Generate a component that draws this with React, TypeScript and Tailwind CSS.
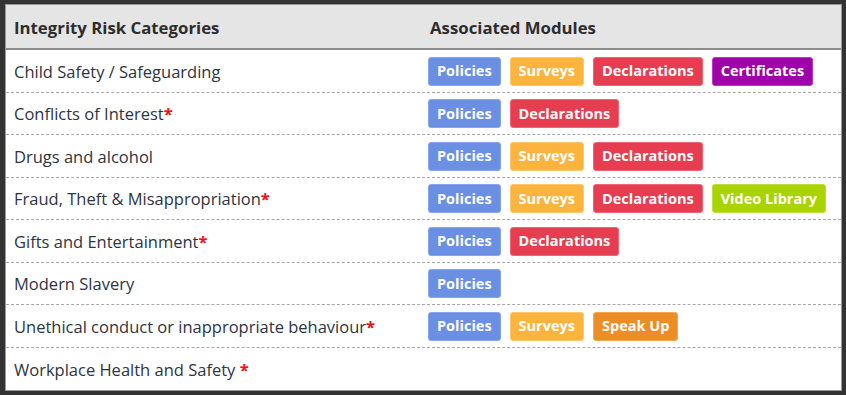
import React from 'react'

type Mod = 'Policies' | 'Surveys' | 'Declarations' | 'Certificates' | 'Video Library' | 'Speak Up'

const modColors: Record<Mod, string> = {
  Policies: 'bg-[#6b8fe3] border-[#86a4ec]',
  Surveys: 'bg-[#fcb43e] border-[#fdc86e]',
  Declarations: 'bg-[#e63d51] border-[#ee6676]',
  Certificates: 'bg-[#9f02a8] border-[#b53dbc]',
  'Video Library': 'bg-[#a9d301] border-[#bedf3b]',
  'Speak Up': 'bg-[#ec8d25] border-[#f2a657]',
}

const rows: { name: string; star?: boolean; space?: boolean; mods: Mod[] }[] = [
  { name: 'Child Safety / Safeguarding', mods: ['Policies', 'Surveys', 'Declarations', 'Certificates'] },
  { name: 'Conflicts of Interest', star: true, mods: ['Policies', 'Declarations'] },
  { name: 'Drugs and alcohol', mods: ['Policies', 'Surveys', 'Declarations'] },
  { name: 'Fraud, Theft & Misappropriation', star: true, mods: ['Policies', 'Surveys', 'Declarations', 'Video Library'] },
  { name: 'Gifts and Entertainment', star: true, mods: ['Policies', 'Declarations'] },
  { name: 'Modern Slavery', mods: ['Policies'] },
  { name: 'Unethical conduct or inappropriate behaviour', star: true, mods: ['Policies', 'Surveys', 'Speak Up'] },
  { name: 'Workplace Health and Safety', star: true, space: true, mods: [] },
]

export default function App() {
  return (
    <div className="w-[846px] h-[395px] bg-[#333333] pt-[4px] pl-[5px] pr-[4px] pb-[4px] font-['Open_Sans',sans-serif]">
      <div className="h-full border border-[#9a9a9a] bg-white flex flex-col overflow-hidden">
        <div className="h-[45px] bg-[#e5e5e5] border-b-2 border-[#8c8c8c] flex items-center pt-[2px] text-[16.8px] font-bold text-[#2d2d2d] shrink-0">
          <div className="w-[413px] pl-[8px]">Integrity Risk Categories</div>
          <div className="pl-[11px]">Associated Modules</div>
        </div>
        {rows.map((r, i) => (
          <div key={i} className={`flex items-center h-[42.5px] shrink-0 ${i < rows.length - 1 ? 'border-b border-dashed border-[#a8a8a8]' : ''}`}>
            <div className="w-[413px] pl-[8px] pt-[3px] text-[16.5px] text-[#2e3440]">
              {r.name}
              {r.star && <span className="text-[#ee1111] font-bold">{r.space ? ' *' : '*'}</span>}
            </div>
            <div className="flex gap-[9px] pl-[9px] pt-[1px]">
              {r.mods.map(m => (
                <span key={m} className={`h-[29px] px-[8px] flex items-center rounded-[3px] border text-white text-[14.5px] font-bold ${modColors[m]}`}>{m}</span>
              ))}
            </div>
          </div>
        ))}
      </div>
    </div>
  )
}
